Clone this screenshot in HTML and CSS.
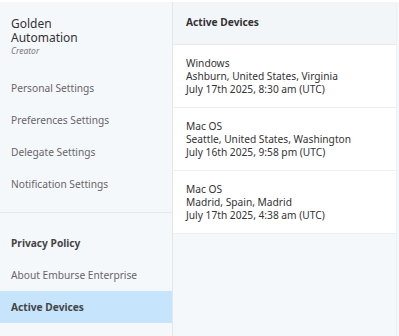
FILE: index.html
```html
<!DOCTYPE html>
<html lang="en">

<head>
    <meta charset="UTF-8">
    <meta name="viewport" content="width=device-width, initial-scale=1.0">
    <title>Active Devices</title>
    <link rel="stylesheet" href="styles.css">
</head>

<body>
    <div class="layout">
        <aside class="sidebar">
            <div class="profile">
                <div class="profile-name">Golden</div>
                <div class="profile-name">Automation</div>
                <div class="profile-role">Creator</div>
            </div>

            <nav class="menu">
                <a class="menu-item">Personal Settings</a>
                <a class="menu-item">Preferences Settings</a>
                <a class="menu-item">Delegate Settings</a>
                <a class="menu-item">Notification Settings</a>
            </nav>

            <nav class="menu menu-bottom">
                <a class="menu-item strong">Privacy Policy</a>
                <a class="menu-item">About Emburse Enterprise</a>
                <a class="menu-item strong active">Active Devices</a>
            </nav>
        </aside>

        <main class="content">
            <div class="content-header">Active Devices</div>
            <div class="device">
                <div>Windows</div>
                <div>Ashburn, United States, Virginia</div>
                <div>July 17th 2025, 8:30 am (UTC)</div>
            </div>
            <div class="device">
                <div>Mac OS</div>
                <div>Seattle, United States, Washington</div>
                <div>July 16th 2025, 9:58 pm (UTC)</div>
            </div>
            <div class="device">
                <div>Mac OS</div>
                <div>Madrid, Spain, Madrid</div>
                <div>July 17th 2025, 4:38 am (UTC)</div>
            </div>
        </main>
    </div>
</body>

</html>
```

FILE: styles.css
```css
body {
    font-family: "Noto Sans", "Open Sans", sans-serif;
    margin: 0;
    background-color: #f5f8fb;
    color: #333;
}

.layout {
    display: flex;
    height: 334px;
    border-top: 2px solid #fff;
}

.sidebar {
    width: 172px;
    border-right: 1px solid #e3e7eb;
    display: flex;
    flex-direction: column;
}

.profile {
    padding: 15px 11px 0;
    height: 55px;
}

.profile-name {
    font-size: 12px;
    line-height: 14px;
    color: #333;
}

.profile-role {
    font-size: 8.5px;
    font-style: italic;
    color: #777;
}

.menu {
    display: flex;
    flex-direction: column;
    padding-bottom: 12px;
}

.menu-bottom {
    border-top: 1px solid #e6e9ec;
    padding-top: 14px;
}

.menu-item {
    display: block;
    height: 32px;
    line-height: 32px;
    padding: 0 11px;
    font-size: 10.2px;
    color: #666;
    cursor: pointer;
}

.menu-item.strong {
    font-weight: bold;
    color: #444;
}

.menu-item.active {
    background-color: #c6e4fb;
}

.content {
    flex: 1;
    margin-right: 2px;
    border-right: 1px solid #eef1f4;
}

.content-header {
    height: 42px;
    line-height: 40px;
    padding: 0 13px;
    font-size: 10.2px;
    font-weight: bold;
    background-color: #f3f6f9;
    border-bottom: 1px solid #e6e9ec;
}

.device {
    padding: 12px 13px 11px;
    font-size: 10.2px;
    line-height: 13px;
    background: white;
    border-bottom: 1px solid #eceff2;
}
```
